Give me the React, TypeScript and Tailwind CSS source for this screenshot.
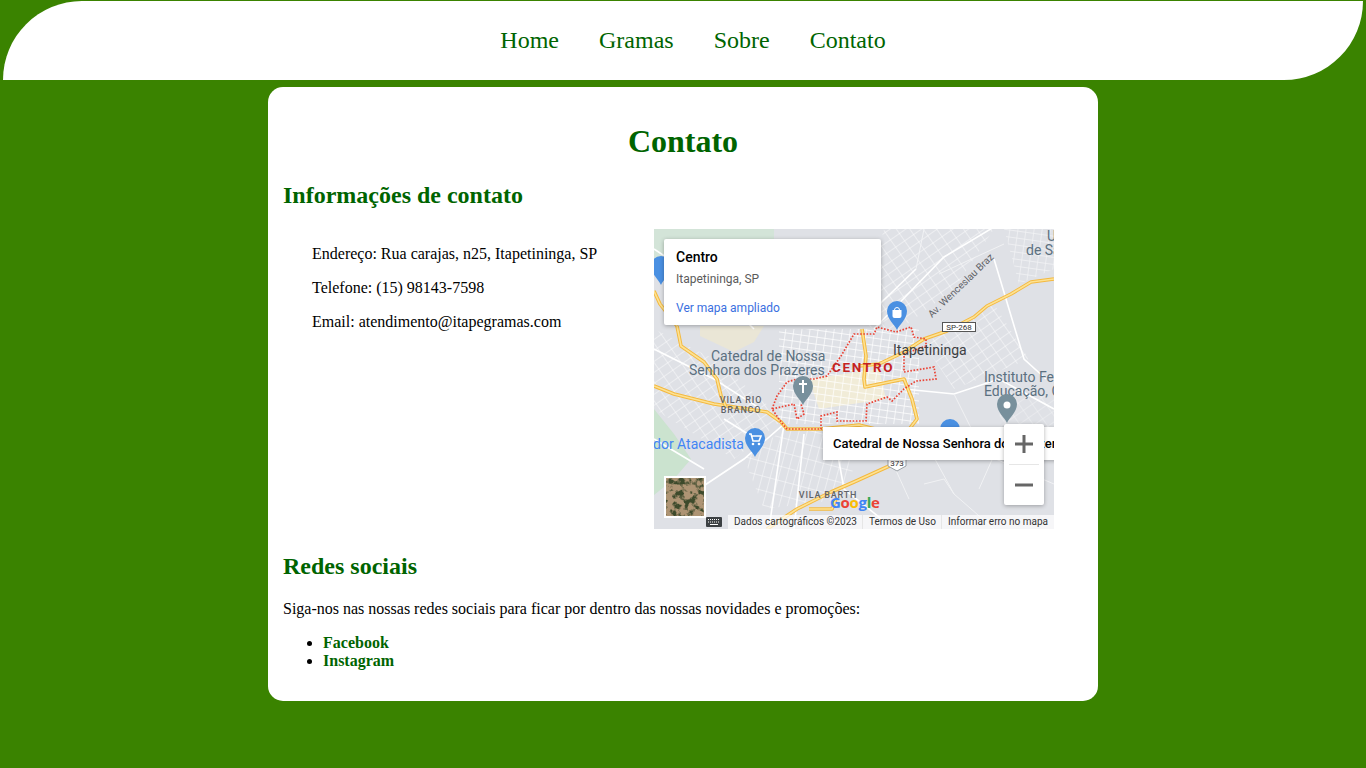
const navLinks = ['Home', 'Gramas', 'Sobre', 'Contato'];

// ruas em branco, coordenadas do mapa (400x300)
const streets = [
  'M0 20 L60 60 L100 100',
  'M0 120 L60 150 L130 195 L90 230 L30 270',
  'M130 195 L115 300',
  'M150 205 L140 300',
  'M180 205 L190 260 L240 300',
  'M205 95 L262 40',
  'M220 100 L290 28 L345 -5',
  'M340 30 L370 130 L392 150',
  'M250 160 L300 165 L345 150 L400 180',
  'M70 190 L110 215',
  'M0 210 L50 240',
];

const thinStreets = [
  'M285 45 L350 15',
  'M270 210 L300 265 L340 300',
  'M230 215 L255 270',
  'M350 220 L390 205',
  'M300 165 L330 225 L400 255',
  'M325 260 L345 215 L370 240',
  'M270 255 L290 250 L300 265',
  'M270 0 L262 40',
];

const highways = [
  'M400 50 L377 53 L357 65 L333 77 L320 88 L293 102 L270 110 L250 123 L225 135 L205 137',
  'M208 100 L212 127 L210 150 L211 158 L250 150 L258 170 L263 190 L250 207 L244 233 L200 253 L177 263 L143 280 L113 300',
  'M0 157 L20 165 L60 175 L113 183 L127 193 L133 200 L167 200 L205 196 L250 207',
  'M23 97 L27 117 L50 133 L63 150 L67 167 L72 178',
  'M0 62 L6 75 L23 97',
  'M155 280 L178 280 L182 270',
];

const boundary =
  'M118 180 L123 167 L133 153 L143 150 L160 150 L173 147 L187 127 L200 105 L220 105 L223 98 L242 103 L257 98 L260 108 L272 110 L272 117 L250 125 L250 143 L280 138 L282 150 L262 152 L250 160 L238 172 L233 168 L213 175 L212 192 L183 192 L183 183 L167 187 L167 200 L133 200 L127 193 L118 180 L140 175 L143 190 L150 185 L147 175';

function Pin({ x, y, color, children }: { x: number; y: number; color: string; children?: React.ReactNode }) {
  return (
    <g transform={`translate(${x} ${y})`}>
      <path d="M0 14 C-2 9 -10 3 -10 -5 A10 10 0 0 1 10 -5 C10 3 2 9 0 14 Z" fill={color} />
      {children}
    </g>
  );
}

function MapDrawing() {
  return (
    <svg viewBox="0 0 400 300" className="block w-[400px] h-[300px]" fontFamily="Roboto, sans-serif">
      <defs>
        <pattern id="blocosA" width="11" height="9" patternUnits="userSpaceOnUse" patternTransform="rotate(-35)">
          <path d="M0 0 H11 M0 0 V9" stroke="#ffffff" strokeWidth="0.9" fill="none" />
        </pattern>
        <pattern id="blocosB" width="8" height="7" patternUnits="userSpaceOnUse" patternTransform="rotate(8)">
          <path d="M0 0 H8 M0 0 V7" stroke="#ffffff" strokeWidth="1.4" fill="none" />
        </pattern>
        <pattern id="blocosC" width="8" height="14" patternUnits="userSpaceOnUse" patternTransform="rotate(15)">
          <path d="M0 0 H8 M0 0 V14" stroke="#ffffff" strokeWidth="0.9" fill="none" />
        </pattern>
        <filter id="satelite" x="0" y="0" width="100%" height="100%" colorInterpolationFilters="sRGB">
          <feTurbulence type="fractalNoise" baseFrequency="0.16" numOctaves="3" seed="11" />
          <feColorMatrix values="0 0 0 0 0.24  0 0 0 0 0.29  0 0 0 0 0.17  5 0 0 0 -2.3" />
        </filter>
      </defs>
      <rect width="400" height="300" fill="#dfe1e6" />

      {/* areas verdes */}
      <path d="M0 0 H120 V12 L60 12 L0 30 Z" fill="#d3e4d8" />
      <path d="M0 180 L20 205 L37 230 L20 250 L0 266 Z" fill="#cbe3cf" />
      <path d="M46 97 H110 L100 113 L80 123 L46 107 Z" fill="#eae6d6" />

      {/* centro */}
      <path d="M155 150 L225 140 L232 170 L165 180 Z" fill="#fdf3cf" opacity="0.6" />

      {/* quarteiroes */}
      <path d="M230 0 H340 L300 60 L240 105 L205 95 Z" fill="url(#blocosA)" />
      <path d="M270 115 L340 75 L375 130 L300 160 Z" fill="url(#blocosA)" />
      <path d="M0 100 L60 130 L130 190 L80 230 L0 180 Z" fill="url(#blocosA)" />
      <path d="M90 230 L130 200 L210 205 L190 270 L110 280 Z" fill="url(#blocosC)" />
      <path d="M125 100 H265 V195 H125 Z" fill="url(#blocosB)" />
      <path d="M340 150 L400 170 V230 L350 215 Z" fill="url(#blocosA)" opacity="0.6" />
      <path d="M350 0 H400 V40 L365 55 Z" fill="url(#blocosB)" opacity="0.6" />

      {streets.map((d) => (
        <path key={d} d={d} stroke="#ffffff" strokeWidth="1.6" fill="none" />
      ))}
      {thinStreets.map((d) => (
        <path key={d} d={d} stroke="#f1f2f4" strokeWidth="1" fill="none" />
      ))}
      {highways.map((d) => (
        <g key={d} fill="none" strokeLinejoin="round">
          <path d={d} stroke="#f4b93f" strokeWidth="3.6" />
          <path d={d} stroke="#fde293" strokeWidth="1.6" />
        </g>
      ))}
      <path d={boundary} fill="none" stroke="#ea4335" strokeWidth="1.7" strokeDasharray="1.6 1.6" />

      {/* rotulos */}
      <g fontSize="14" fill="#5b7080">
        <text x="57" y="132">Catedral de Nossa</text>
        <text x="35" y="146">Senhora dos Prazeres</text>
        <text x="330" y="153">Instituto Fe</text>
        <text x="330" y="167">Educação, C</text>
        <text x="372" y="26">de Sã</text>
        <text x="393" y="12">U</text>
      </g>
      <text x="239" y="126" fontSize="14" fill="#3c4043">Itapetininga</text>
      <text x="178" y="143" fontSize="13.5" fontWeight="700" letterSpacing="1.7" fill="#c5221f">CENTRO</text>
      <g fontSize="9" fontWeight="500" letterSpacing="0.8" fill="#5f6368" textAnchor="middle">
        <text x="87" y="174">VILA RIO</text>
        <text x="87" y="184">BRANCO</text>
        <text x="174" y="269">VILA BARTH</text>
      </g>
      <text x="-1" y="220" fontSize="14" fill="#4285f4">dor Atacadista</text>
      <text transform="translate(278 89) rotate(-44)" fontSize="10" fill="#5f6368">Av. Wenceslau Braz</text>

      {/* placas */}
      <rect x="288.5" y="93.5" width="33" height="9" fill="#fff" stroke="#555" />
      <text x="305" y="101" fontSize="8" fill="#333" textAnchor="middle">SP-268</text>
      <path d="M234 229 H252 V237 L243 242 L234 237 Z" fill="#fff" stroke="#9aa0a6" />
      <text x="243" y="237" fontSize="8" fill="#333" textAnchor="middle">373</text>

      {/* marcadores */}
      <Pin x={243} y={87} color="#4a90e2">
        <path d="M-4.5 -6 H4.5 V0 A2 2 0 0 1 2.5 2 H-2.5 A2 2 0 0 1 -4.5 0 Z" fill="#fff" />
        <path d="M-2.5 -6 A2.5 2.5 0 0 1 2.5 -6" stroke="#fff" fill="none" />
      </Pin>
      <Pin x={101} y={214} color="#4a90e2">
        <path d="M-6 -9 H-4 L-2 -2 H4 L6 -7 H-3" stroke="#fff" strokeWidth="1.6" fill="none" />
        <circle cx="-2" cy="1" r="1.3" fill="#fff" />
        <circle cx="4" cy="1" r="1.3" fill="#fff" />
      </Pin>
      <Pin x={149} y={162} color="#78909c">
        <path d="M-1 -11 H1 V-8 H4 V-6 H1 V2 H-1 V-6 H-4 V-8 H-1 Z" fill="#fff" />
      </Pin>
      <Pin x={353} y={180} color="#78909c">
        <circle r="3.5" cy="-4" fill="#fff" />
      </Pin>
      <Pin x={296} y={205} color="#4a90e2" />
      <Pin x={7} y={42} color="#4a90e2" />

      {/* logo */}
      <text x="176" y="279" fontSize="15" letterSpacing="-0.3" fontFamily="'Open Sans', sans-serif" fontWeight="700">
        <tspan fill="#4285f4">G</tspan>
        <tspan fill="#ea4335">o</tspan>
        <tspan fill="#fbbc05">o</tspan>
        <tspan fill="#4285f4">g</tspan>
        <tspan fill="#34a853">l</tspan>
        <tspan fill="#ea4335">e</tspan>
      </text>

      {/* miniatura de satelite */}
      <rect x="10" y="247" width="42" height="42" fill="#fff" />
      <rect x="12" y="249" width="38" height="38" fill="#ae9474" />
      <rect x="12" y="249" width="38" height="38" filter="url(#satelite)" />

      {/* teclado */}
      <rect x="52" y="288" width="16" height="10" rx="1" fill="#3c4043" />
      <path d="M54 290.5 H66 M54 293 H66" stroke="#fff" strokeDasharray="1 1" />
      <path d="M56 295.5 H64" stroke="#fff" />
    </svg>
  );
}

function MapEmbed() {
  return (
    <div className="relative w-[400px] h-[300px] shrink-0 overflow-hidden font-['Roboto',sans-serif]">
      <MapDrawing />

      <div className="absolute left-[10px] top-[10px] w-[217px] h-[86px] bg-white rounded-[2px] shadow-[0_1px_4px_rgba(0,0,0,0.3)] px-3 pt-[9px]">
        <div className="text-[14px] leading-[18px] font-medium text-black">Centro</div>
        <div className="text-[12px] leading-[16px] mt-[5px] text-[#5b5b5b]">Itapetininga, SP</div>
        <div className="text-[12px] leading-[16px] mt-[13px] text-[#3a6fe0]">Ver mapa ampliado</div>
      </div>

      <div className="absolute left-[169px] top-[198px] w-[240px] h-[33px] bg-white shadow-[0_1px_4px_rgba(0,0,0,0.3)] pl-[10px] flex items-center whitespace-nowrap text-[13px] font-medium text-black">
        Catedral de Nossa Senhora dos Prazeres
      </div>

      <div className="absolute left-[350px] top-[195px] w-[40px] h-[81px] bg-white rounded-[2px] shadow-[0_1px_4px_rgba(0,0,0,0.3)] flex flex-col items-center">
        <svg viewBox="0 0 18 18" className="w-[18px] h-[18px] mt-[11px]">
          <path d="M7.5 0 H10.5 V7.5 H18 V10.5 H10.5 V18 H7.5 V10.5 H0 V7.5 H7.5 Z" fill="#666666" />
        </svg>
        <div className="w-[30px] h-px bg-[#e6e6e6] mt-[11px]" />
        <svg viewBox="0 0 18 18" className="w-[18px] h-[18px] mt-[11px]">
          <path d="M0 7.5 H18 V10.5 H0 Z" fill="#666666" />
        </svg>
      </div>

      <div className="absolute right-0 bottom-0 h-[14px] flex items-center bg-white/70 text-[10px] leading-[14px] text-[#333333] whitespace-nowrap">
        <span className="pl-[6px] pr-[5px]">Dados cartográficos ©2023</span>
        <span className="pl-[6px] pr-[5px] border-l border-[#e6e6e6]">Termos de Uso</span>
        <span className="px-[6px] border-l border-[#e6e6e6]">Informar erro no mapa</span>
      </div>
    </div>
  );
}

export default function App() {
  return (
    <div className="min-h-screen bg-[#3a8300] pt-px font-['Liberation_Serif',serif] text-[16px] leading-[18px] text-black">
      {/* Menu */}
      <nav className="mx-[3px] h-[79px] bg-white rounded-tl-[80px] rounded-br-[80px] pl-5 flex items-center justify-center gap-10">
        {navLinks.map((link) => (
          <a key={link} href="#" className="text-[24px] leading-[27px] text-[#006400]">
            {link}
          </a>
        ))}
      </nav>

      {/* Conteudo */}
      <main className="w-[830px] mx-auto mt-[7px] bg-white rounded-[15px] px-[15px] pt-[36px] pb-[31px]">
        <h1 className="text-[32px] leading-[37px] font-bold text-center text-[#006400]">Contato</h1>
        <h2 className="text-[24px] leading-[28px] font-bold text-[#006400] mt-[21px]">Informações de contato</h2>

        <div className="flex mt-[20px]">
          <div className="w-[371px] pl-[29px] pt-[16px] flex flex-col gap-4">
            <p>Endereço: Rua carajas, n25, Itapetininga, SP</p>
            <p>Telefone: (15) 98143-7598</p>
            <p>Email: atendimento@itapegramas.com</p>
          </div>
          <MapEmbed />
        </div>

        <h2 className="text-[24px] leading-[28px] font-bold text-[#006400] mt-[23px]">Redes sociais</h2>
        <p className="mt-[20px]">Siga-nos nas nossas redes sociais para ficar por dentro das nossas novidades e promoções:</p>
        <ul className="list-disc pl-10 mt-4">
          <li>
            <a href="#" className="font-bold text-[#006400]">Facebook</a>
          </li>
          <li>
            <a href="#" className="font-bold text-[#006400]">Instagram</a>
          </li>
        </ul>
      </main>
    </div>
  );
}
